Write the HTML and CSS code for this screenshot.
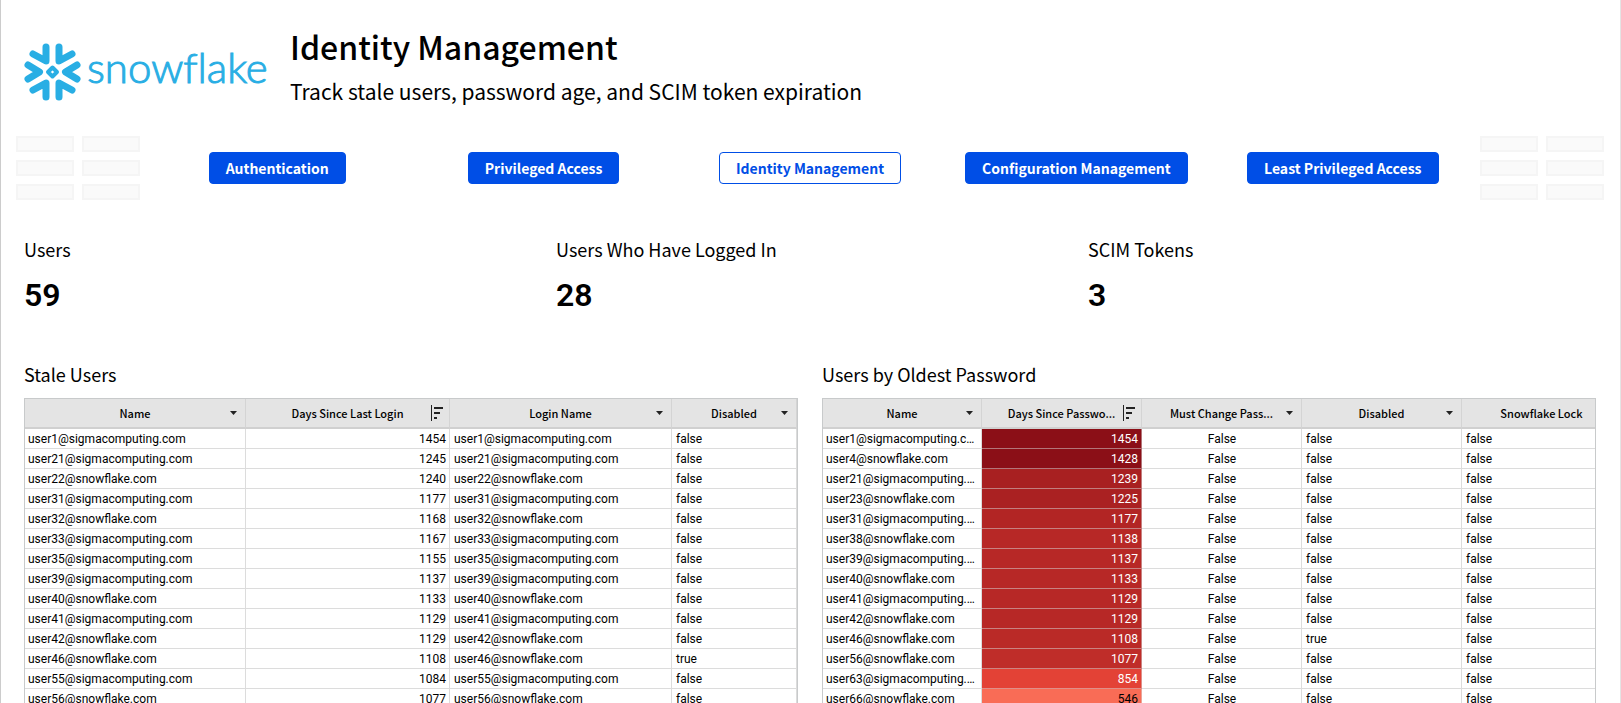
FILE: index.html
```html
<!DOCTYPE html>
<html lang="en">
<head>
<meta charset="utf-8">
<title>Identity Management</title>
<link rel="stylesheet" href="styles.css">
</head>
<body>
<main class="page">
  <header class="masthead">
    <svg class="logo" viewBox="0 0 244 60" role="img" aria-label="snowflake">
      <g class="logo-mark">
        <path d="M22 4V18L9 11M35 4V18L48 11M22 54V40L9 47M35 54V40L48 47M4 22L15.500 29L4 36M53 22L41.500 29L53 36"/>
        <path class="logo-core" d="M28.500 24.500L33 29L28.500 33.500L24 29Z"/>
      </g>
      <text class="logo-word" x="63" y="40">snowflake</text>
    </svg>
    <div>
      <h1 class="title">Identity Management</h1>
      <p class="subtitle">Track stale users, password age, and SCIM token expiration</p>
    </div>
  </header>

  <nav class="tabs" aria-label="Dashboards">
    <div class="blocks"><i></i><i></i><i></i><i></i><i></i><i></i></div>
    <div class="tab-slot"><button class="tab">Authentication</button></div>
    <div class="tab-slot"><button class="tab">Privileged Access</button></div>
    <div class="tab-slot"><button class="tab tab-current">Identity Management</button></div>
    <div class="tab-slot"><button class="tab">Configuration Management</button></div>
    <div class="tab-slot"><button class="tab">Least Privileged Access</button></div>
    <div class="blocks"><i></i><i></i><i></i><i></i><i></i><i></i></div>
  </nav>

  <section class="stats">
    <div><h2 class="label">Users</h2><p class="value">59</p></div>
    <div><h2 class="label">Users Who Have Logged In</h2><p class="value">28</p></div>
    <div><h2 class="label">SCIM Tokens</h2><p class="value">3</p></div>
  </section>

  <section class="panels">
    <div class="panel">
      <h2 class="label">Stale Users</h2>
      <div class="frame">
        <table class="grid">
          <colgroup><col class="w-name"><col class="w-days"><col class="w-login"><col></colgroup>
          <thead><tr id="stale-head"></tr></thead>
          <tbody id="stale-body"></tbody>
        </table>
      </div>
    </div>
    <div class="panel">
      <h2 class="label">Users by Oldest Password</h2>
      <div class="frame">
        <table class="grid grid-wide">
          <colgroup><col class="w-user"><col><col><col><col></colgroup>
          <thead><tr id="password-head"></tr></thead>
          <tbody id="password-body"></tbody>
        </table>
      </div>
    </div>
  </section>
</main>
<script src="tables.js"></script>
</body>
</html>
```
FILE: styles.css
```css
* { box-sizing: border-box; }

body {
  margin: 0;
  overflow: hidden;
  background: #fff;
  color: #000;
  font-family: "Noto Sans CJK SC", "Open Sans", sans-serif;
}

h1, h2, p { margin: 0; font-weight: 400; }

.page {
  min-height: 100vh;
  border-left: 1px solid #ccc;
  border-right: 1px solid #e4e4e4;
}

.masthead {
  display: flex;
  gap: 22px;
  padding: 22px 24px 0 23px;
}

.logo { width: 244px; height: 60px; margin-top: 21px; flex: none; }
.logo-mark { fill: none; stroke: #29aee4; stroke-width: 7; stroke-linecap: round; stroke-linejoin: round; }
.logo-core { stroke-width: 4; }
.logo-word {
  fill: #29aee4;
  stroke: #29aee4;
  stroke-width: 1px;
  font-family: Lato, sans-serif;
  font-weight: 300;
  font-size: 42px;
  font-variant-ligatures: none;
}

.title { font-size: 32px; line-height: 48px; font-weight: 500; }
.subtitle { font-size: 21px; line-height: 42px; }

.tabs {
  display: grid;
  grid-template-columns: 124px repeat(5, 1fr) 124px;
  gap: 8px;
  align-items: center;
  padding: 0 16px 0 15px;
  margin-top: 24px;
}
.blocks { display: grid; grid-template-columns: 1fr 1fr; gap: 8px; }
.blocks i { height: 16px; background: #fafafa; border: 2px solid #f5f5f5; }
.tab-slot { text-align: center; }
.tab {
  height: 32px;
  padding: 0 16px;
  border: 1px solid #004ee6;
  border-radius: 4px;
  background: #004ee6;
  color: #fff;
  font: 700 14px/20px "Noto Sans CJK SC", "Open Sans", sans-serif;
}
.tab-current { background: #fff; color: #004ee6; }

.stats {
  display: grid;
  grid-template-columns: repeat(3, 1fr);
  padding: 0 0 0 23px;
  margin-top: 35px;
}
.label { font-size: 18px; line-height: 28px; }
.value { font-size: 32px; line-height: 40px; font-weight: 600; font-family: Roboto, sans-serif; margin-top: 12px; }

.panels {
  display: grid;
  grid-template-columns: 1fr 1fr;
  gap: 24px;
  padding: 0 24px 0 23px;
  margin-top: 45px;
}
.panel { min-width: 0; }
.frame {
  margin-top: 10px;
  overflow: hidden;
  border: 1px solid #c8cacb;
  border-bottom: 0;
}

.grid { width: 100%; table-layout: fixed; border-collapse: separate; border-spacing: 0; }
.grid-wide { width: 799px; }
.w-name { width: 221px; }
.w-days { width: 204px; }
.w-login { width: 222px; }
.w-user { width: 159px; }

.grid th {
  height: 30px;
  padding: 0;
  background: #e4e4e4;
  border-right: 1px solid #d4d4d4;
  border-bottom: 2px solid #d0d0d0;
  font-size: 11px;
  line-height: 16px;
  font-weight: 500;
}
.head { display: grid; grid-template-columns: 20px 1fr 20px; align-items: center; }
.head-text, .grid td { overflow: hidden; white-space: nowrap; text-overflow: ellipsis; }
.menu { display: flex; padding: 0; border: 0; background: none; }
.grid td {
  height: 20px;
  padding: 1px 3px;
  border-right: 1px solid #dcdcdc;
  border-bottom: 1px solid #dcdcdc;
  font: 12px/16px Roboto, sans-serif;
}
.grid td + td { padding-left: 4px; }
.grid .num { text-align: right; }
.grid .mid { text-align: center; }
.grid .heat { color: #fff; border-color: rgba(220, 220, 220, 0.5); }
.grid .heat-low { color: #000; }
```
FILE: tables.js
```js
const CARET = '<svg width="16" height="16" viewBox="0 0 16 16"><path d="M5 6h7L8.500 10z" fill="#222"/></svg>';
const SORT = '<svg width="16" height="16" viewBox="0 0 16 16"><path d="M2.500 0v16" stroke="#222"/><path d="M5 3h9M5 8h6M5 13h3" stroke="#222" stroke-width="2"/></svg>';

const S = "@sigmacomputing.com";
const F = "@snowflake.com";

const stale = [
  ["user1" + S, 1454], ["user21" + S, 1245], ["user22" + F, 1240], ["user31" + S, 1177],
  ["user32" + F, 1168], ["user33" + S, 1167], ["user35" + S, 1155], ["user39" + S, 1137],
  ["user40" + F, 1133], ["user41" + S, 1129], ["user42" + F, 1129], ["user46" + F, 1108],
  ["user55" + S, 1084], ["user56" + F, 1077],
];

const passwords = [
  ["user1" + S, 1454, "#8b0f17"], ["user4" + F, 1428, "#8b0f17"], ["user21" + S, 1239, "#a82021"],
  ["user23" + F, 1225, "#aa2122"], ["user31" + S, 1177, "#b22524"], ["user38" + F, 1138, "#b72826"],
  ["user39" + S, 1137, "#b72826"], ["user40" + F, 1133, "#b72826"], ["user41" + S, 1129, "#b72826"],
  ["user42" + F, 1129, "#b72826"], ["user46" + F, 1108, "#ba2a27"], ["user56" + F, 1077, "#bf2d29"],
  ["user63" + S, 854, "#e34236"], ["user66" + F, 546, "#f96c56"],
];

const head = (text, icon) =>
  `<th scope="col"><div class="head"><span></span><span class="head-text">${text}</span>` +
  `<button class="menu" aria-label="${text} options">${icon}</button></div></th>`;

const fill = (id, html) => { document.getElementById(id).innerHTML = html; };

fill("stale-head", head("Name", CARET) + head("Days Since Last Login", SORT) +
  head("Login Name", CARET) + head("Disabled", CARET));
fill("stale-body", stale.map(([name, days]) =>
  `<tr><td>${name}</td><td class="num">${days}</td><td>${name}</td>` +
  `<td>${days === 1108}</td></tr>`).join(""));

fill("password-head", head("Name", CARET) + head("Days Since Passwo...", SORT) +
  head("Must Change Pass...", CARET) + head("Disabled", CARET) + head("Snowflake Lock", CARET));
fill("password-body", passwords.map(([name, days, color]) =>
  `<tr><td>${name}</td><td class="num heat${days < 600 ? " heat-low" : ""}" style="background-color:${color}">${days}</td>` +
  `<td class="mid">False</td><td>${days === 1108}</td><td>false</td></tr>`).join(""));
```
